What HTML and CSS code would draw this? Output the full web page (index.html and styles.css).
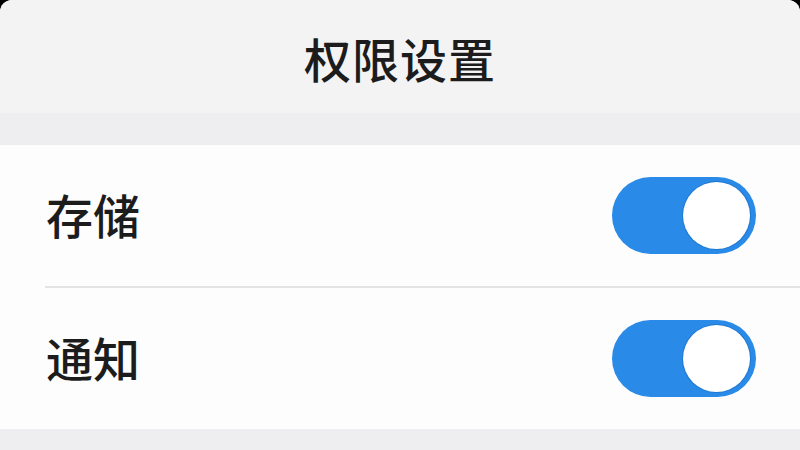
FILE: index.html
```html
<!DOCTYPE html>
<html lang="zh-CN">

<head>
    <meta charset="UTF-8">
    <meta name="viewport" content="width=device-width, initial-scale=1.0">
    <title>权限设置</title>
    <link rel="stylesheet" href="styles.css">
</head>

<body>
    <div class="screen">
        <header class="nav-bar">
            <h1>权限设置</h1>
        </header>

        <div class="group-gap"></div>

        <div class="settings-list">
            <div class="setting-row">
                <span class="setting-label">存储</span>
                <span class="switch on"><span class="knob"></span></span>
            </div>
            <div class="divider"></div>
            <div class="setting-row">
                <span class="setting-label">通知</span>
                <span class="switch on"><span class="knob"></span></span>
            </div>
        </div>

        <div class="group-gap bottom"></div>
    </div>
</body>

</html>
```

FILE: styles.css
```css
body {
    margin: 0;
    padding: 0;
    background-color: #000;
    font-family: "Noto Sans CJK SC", "Noto Sans", sans-serif;
}

.screen {
    width: 800px;
    height: 450px;
    background-color: #efeff1;
    border-radius: 12px 12px 0 0;
    overflow: hidden;
    display: flex;
    flex-direction: column;
}

.nav-bar {
    height: 113px;
    background-color: #f3f3f3;
    display: flex;
    justify-content: center;
    align-items: center;
}

.nav-bar h1 {
    margin: 0;
    font-size: 47px;
    font-weight: 500;
    color: #1c1c1c;
    letter-spacing: 1px;
    padding-top: 2px;
}

.group-gap {
    height: 32px;
    background-color: #eeeef0;
}

.group-gap.bottom {
    flex: 1;
}

.settings-list {
    background-color: #fdfdfd;
}

.setting-row {
    height: 141px;
    padding: 0 44px 0 46px;
    display: flex;
    align-items: center;
    justify-content: space-between;
}

.setting-label {
    font-size: 47px;
    font-weight: 500;
    color: #1c1c1c;
    margin-top: -5px;
}

.divider {
    height: 2px;
    margin-left: 45px;
    background-color: #e4e4e4;
}

/* toggle switch */
.switch {
    width: 144px;
    height: 77px;
    border-radius: 39px;
    background-color: #2a8ae8;
    display: flex;
    align-items: center;
    justify-content: flex-end;
    padding: 0 6px;
    box-sizing: border-box;
}

.switch .knob {
    width: 67px;
    height: 67px;
    border-radius: 50%;
    background-color: #fff;
    box-shadow: 0 0 0 1px #1f78d0;
}
```
